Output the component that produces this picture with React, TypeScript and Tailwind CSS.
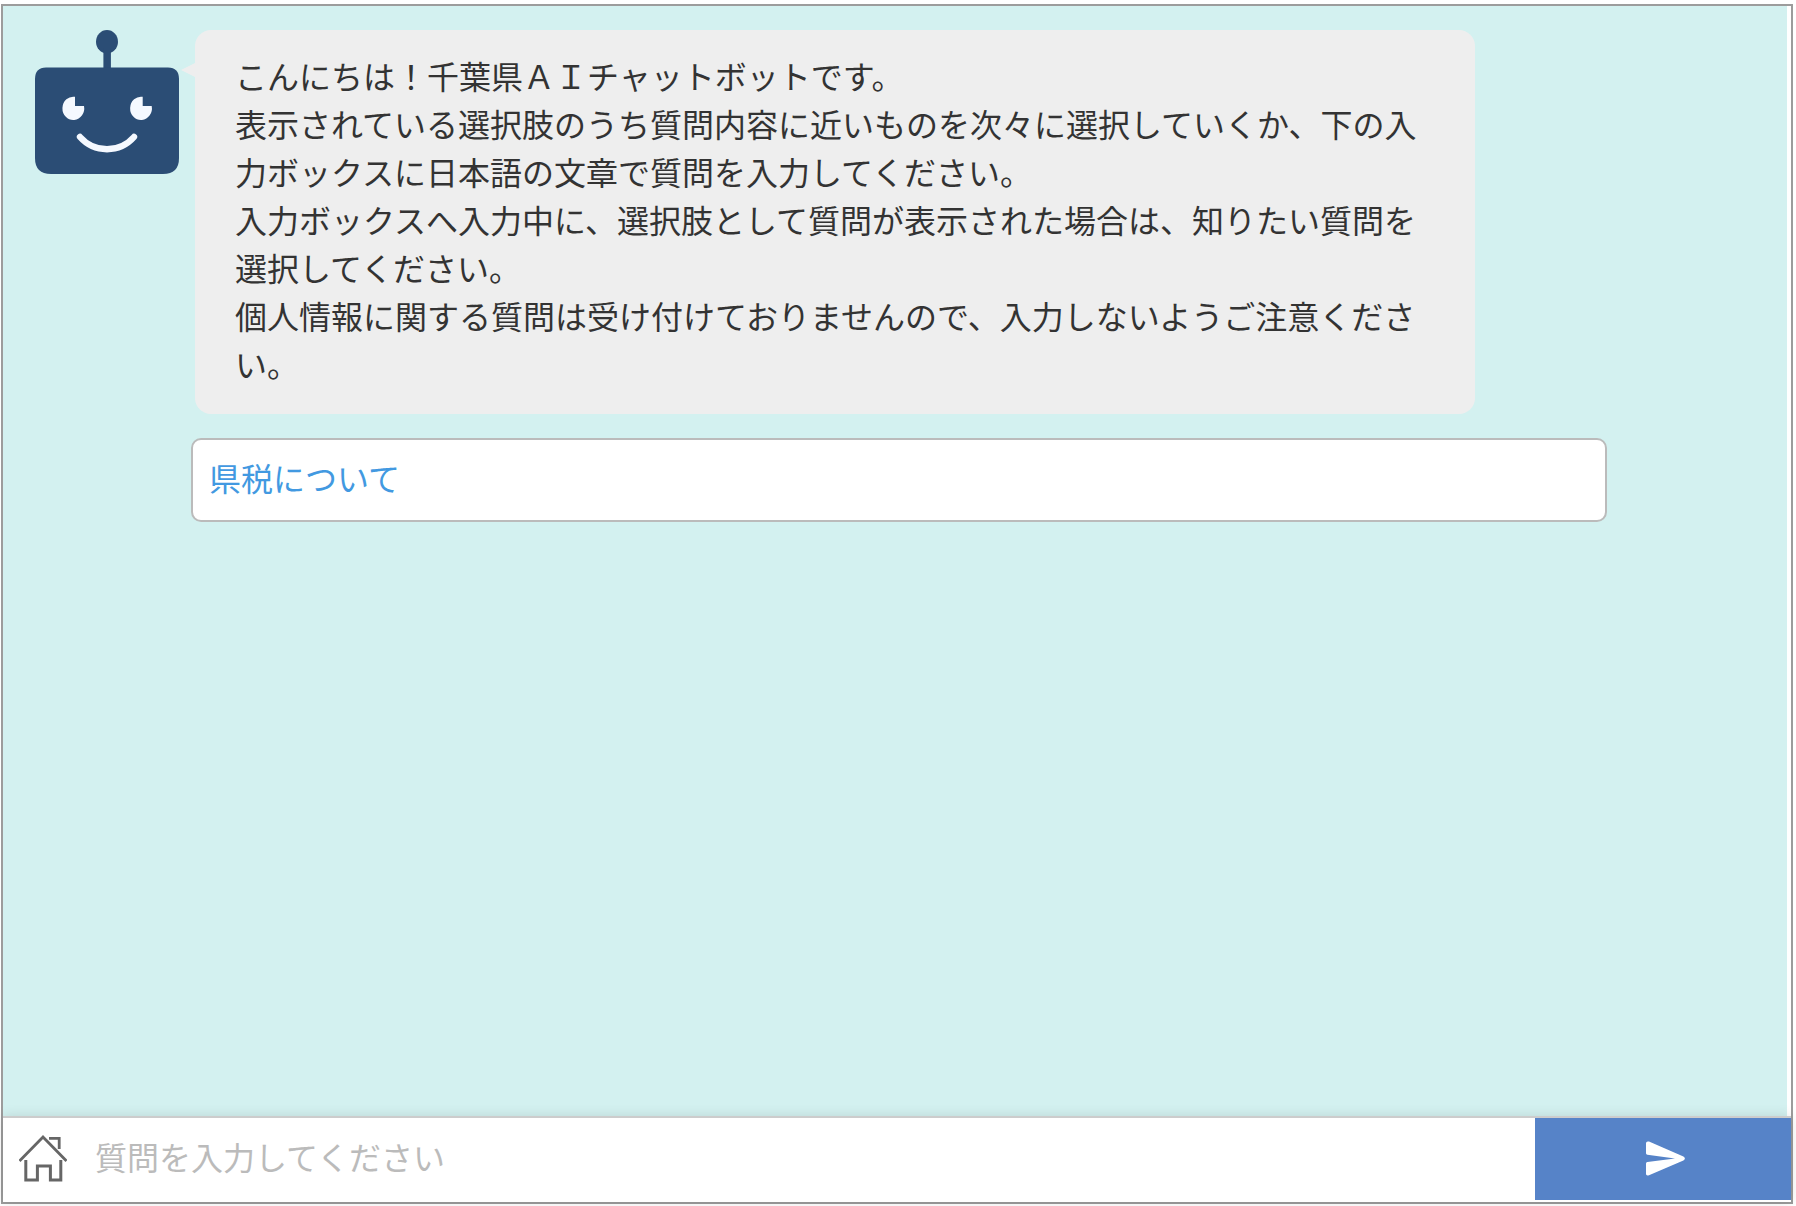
import React, { useState } from 'react';

const GREETING_LINES = [
  'こんにちは！千葉県ＡＩチャットボットです。',
  '表示されている選択肢のうち質問内容に近いものを次々に選択していくか、下の入力ボックスに日本語の文章で質問を入力してください。',
  '入力ボックスへ入力中に、選択肢として質問が表示された場合は、知りたい質問を選択してください。',
  '個人情報に関する質問は受け付けておりませんので、入力しないようご注意ください。',
];

const OPTIONS = ['県税について'];

const BotAvatar: React.FC = () => (
  <svg className="size-36 shrink-0" viewBox="0 0 144 144" role="img" aria-label="チャットボット">
    <g fill="#2b4d75">
      <ellipse cx="72" cy="11.7" rx="11" ry="11.7" />
      <rect x="68.4" y="18" width="7.5" height="22" />
      <path d="M11 37.4H133Q144 37.4 144 49V128Q144 144 128 144H16Q0 144 0 128V49Q0 37.4 11 37.4Z" />
    </g>
    <g fill="#f5f9ff">
      <path d="M40 66.8V76H49A10.9 11.7 0 1 1 40 66.8Z" />
      <path d="M107.7 66.8V76H116.7A10.9 11.7 0 1 1 107.7 66.8Z" />
    </g>
    <path d="M45 107A36 36 0 0 0 99 107" fill="none" stroke="#f5f9ff" strokeWidth="6.4" strokeLinecap="round" />
  </svg>
);

const HomeIcon: React.FC = () => (
  <svg className="h-12 w-12" viewBox="0 0 48 48" fill="none" stroke="#666" strokeWidth="2.8" aria-hidden="true">
    <path d="M0.5 26L24 2L47.5 26" />
    <path d="M30 3.4H40.2V14" />
    <path d="M6.8 25V45H18.4V31H31.4V45H41.8V25" strokeWidth="3" />
  </svg>
);

const SendIcon: React.FC = () => (
  <svg className="h-9 w-10" viewBox="0 0 40 36" fill="#fff" aria-hidden="true">
    <path d="M0 2.2Q0 0 3 0.6L37.4 15.4Q40.4 17.4 37.4 19.4L3 34.2Q0 35 0 33V22.6Q0 21.3 1.4 21.1L29 17.4L1.4 13.7Q0 13.5 0 12.2Z" />
  </svg>
);

const App: React.FC = () => {
  const [question, setQuestion] = useState('');

  const handleSubmit = (event: React.FormEvent<HTMLFormElement>) => {
    event.preventDefault();
    setQuestion('');
  };

  return (
    <div className="flex min-h-screen bg-white pt-1 pr-[3px] pb-0.5 pl-px font-['Noto_Sans_CJK_JP',sans-serif] text-[32px] leading-[48px] text-[#333]">
      <div className="flex flex-1 flex-col border-2 border-[#9c9c9c]">
        <main className="mr-1 flex-1 bg-[#d3f1f0] pt-6 pl-8">
          <div className="flex items-start gap-4">
            <BotAvatar />
            <div className="relative mr-[312px] flex-1 rounded-2xl bg-[#eee] px-10 pt-[21px] pb-[27px]">
              <span className="absolute top-[33px] -left-3.5 border-y-7 border-r-14 border-y-transparent border-r-[#eee]" />
              {GREETING_LINES.map((line) => (
                <p key={line}>{line}</p>
              ))}
            </div>
          </div>

          <ul className="mt-6 mr-[180px] ml-39">
            {OPTIONS.map((option) => (
              <li key={option}>
                <button
                  type="button"
                  className="w-full rounded-[10px] border-2 border-[#bbb] bg-white px-4 pt-[13px] pb-[19px] text-left text-[#4299e1]"
                  onClick={() => setQuestion(option)}
                >
                  {option}
                </button>
              </li>
            ))}
          </ul>
        </main>

        <form
          className="flex h-[86px] border-t-2 border-[#ccc] bg-white pb-0.5 shadow-[0_0_12px_rgba(0,0,0,0.12)]"
          onSubmit={handleSubmit}
        >
          <button type="button" aria-label="ホーム" className="flex w-20 items-center pl-4">
            <HomeIcon />
          </button>
          <input
            type="text"
            aria-label="質問"
            className="min-w-0 flex-1 px-3 pb-1.5 outline-none placeholder:text-[#bbb]"
            placeholder="質問を入力してください"
            value={question}
            onChange={(event) => setQuestion(event.target.value)}
          />
          <button type="submit" aria-label="送信" className="flex w-64 items-center justify-center bg-[#5683c8] pl-1.5">
            <SendIcon />
          </button>
        </form>
      </div>
    </div>
  );
};

export default App;
